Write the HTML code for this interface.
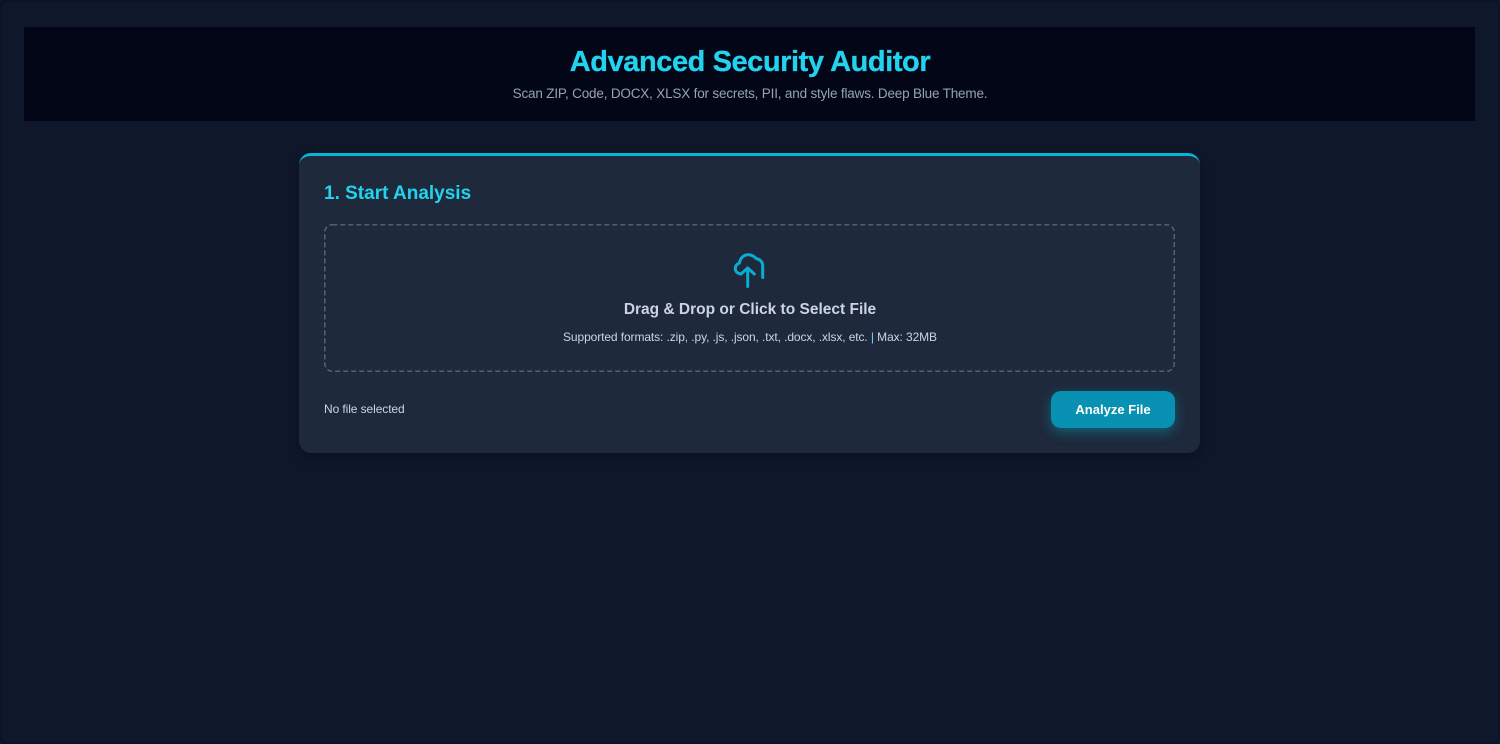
<!DOCTYPE html>
<html>
<head>
<meta charset="utf-8">
<style>
html,body{margin:0;padding:0;width:1500px;height:744px;overflow:hidden;background:#0f172a;}
body{position:relative;font-family:"Liberation Sans",sans-serif;}
#frame{position:absolute;left:0;top:0;width:1496px;height:740px;border:2px solid #0b1324;border-radius:6px;}
.t{position:absolute;white-space:nowrap;line-height:1;}
#hdr{position:absolute;left:24px;top:27px;width:1451px;height:94px;background:#020617;}
#card{position:absolute;left:299px;top:153px;width:901px;height:297px;background:#1e293b;border-top:3px solid #06b6d4;border-radius:12px;box-shadow:0 4px 12px rgba(0,0,0,.3);}
#btn{position:absolute;left:1051px;top:391px;width:124px;height:37px;background:#0891b2;border-radius:10px;box-shadow:0 4px 12px rgba(6,182,212,.4);}
</style>
</head>
<body>
<div id="frame"></div>
<div id="hdr"></div>
<div class="t" style="left:0;width:1500px;text-align:center;top:48px;font-size:29px;font-weight:700;color:#22d3ee;letter-spacing:-.43px;-webkit-text-stroke:.3px #22d3ee;">Advanced Security Auditor</div>
<div class="t" style="left:0;width:1500px;text-align:center;top:87px;font-size:13.5px;color:#94a3b8;letter-spacing:-.18px;">Scan ZIP, Code, DOCX, XLSX for secrets, PII, and style flaws. Deep Blue Theme.</div>
<div id="card"></div>
<div class="t" style="left:324px;top:184px;font-size:19px;font-weight:700;color:#22d3ee;">1. Start Analysis</div>
<svg style="position:absolute;left:324px;top:224px" width="851" height="148" fill="none"><rect x=".75" y=".75" width="849.5" height="146.5" rx="7.5" stroke="#536176" stroke-width="1.5" stroke-dasharray="5 3"/></svg>
<svg style="position:absolute;left:725.5px;top:248px" width="48" height="44" viewBox="0 0 48 44" fill="none" stroke="#08aecf" stroke-width="3" stroke-linecap="round" stroke-linejoin="round">
<path d="M36.7 29.5V18C36.7 13.5 33.5 11 30 10.5C28 8 25 6.8 22 6.8C17.5 6.8 14 10.5 13.5 15C11 16 9.3 18 9.3 20.5C9.3 23.5 11.5 25.5 14.5 25.8"/>
<path d="M21.7 38.5V20.5"/>
<path d="M15 26L21.7 20L28.3 26"/>
</svg>
<div class="t" style="left:0;width:1500px;text-align:center;top:302px;font-size:15.5px;font-weight:700;color:#cbd5e1;">Drag &amp; Drop or Click to Select File</div>
<div class="t" style="left:0;width:1500px;text-align:center;top:331px;font-size:12px;color:#cbd5e1;letter-spacing:-.1px;">Supported formats: .zip, .py, .js, .json, .txt, .docx, .xlsx, etc. <span style="color:#7dd3fc">|</span> Max: 32MB</div>
<div class="t" style="left:324px;top:403px;font-size:12px;color:#cbd5e1;letter-spacing:-.09px;">No file selected</div>
<div id="btn"></div>
<div class="t" style="left:1051px;width:124px;text-align:center;top:403px;font-size:13px;font-weight:700;color:#fff;">Analyze File</div>
</body>
</html>
